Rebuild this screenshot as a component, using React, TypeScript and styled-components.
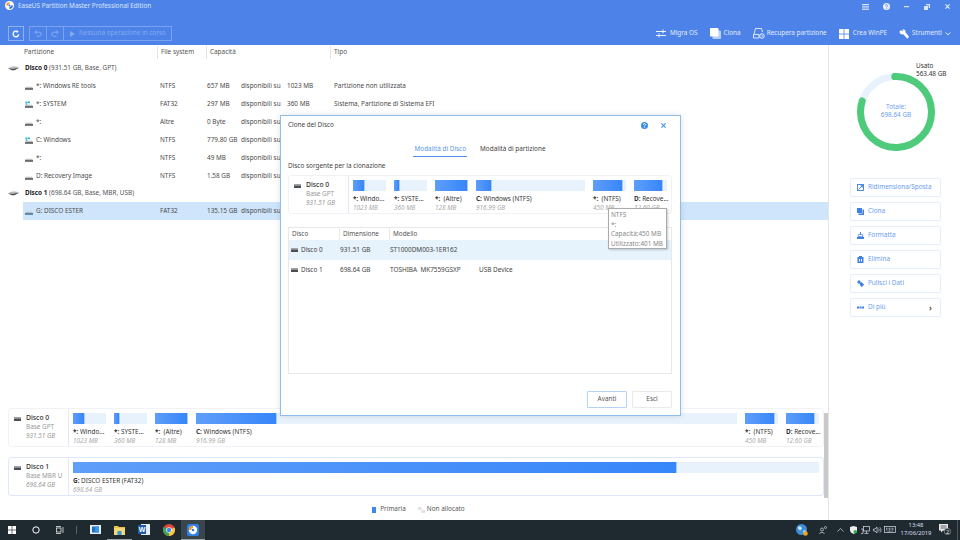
import React from "react";
import styled, { createGlobalStyle } from "styled-components";

const Global = createGlobalStyle`
  html, body { margin: 0; padding: 0; background: #fff; overflow: hidden; }
  #root { width: 960px; height: 540px; }
  * { box-sizing: border-box; }
`;

const Page = styled.div`
  position: relative;
  width: 960px;
  height: 540px;
  display: flex;
  flex-direction: column;
  font-family: "Noto Sans", "Open Sans", sans-serif;
  font-size: 6.4px;
  color: #444;
  line-height: 1;
  background: #fff;
  overflow: hidden;
`;

/* ---------- header ---------- */
const Header = styled.header`
  height: 45px;
  flex: none;
  background: #4d83e9;
  display: flex;
  flex-direction: column;
  color: #e3ecfc;
`;
const TitleBar = styled.div`
  height: 26px;
  flex: none;
  display: flex;
  align-items: flex-start;
  padding: 1px 2px 0 5px;
`;
const TitleText = styled.span`
  margin: 2px 0 0 4px;
  color: #dce7fb;
  white-space: nowrap;
`;
const WindowButtons = styled.div`
  margin-left: auto;
  display: flex;
`;
const WindowButton = styled.div`
  width: 20.5px;
  height: 11px;
  display: flex;
  align-items: center;
  justify-content: center;
`;
const Toolbar = styled.div`
  display: flex;
  align-items: center;
  padding-left: 8px;
`;
const SquareButton = styled.div`
  width: 16px;
  height: 15px;
  border: 1px solid #8cb0f0;
  display: flex;
  align-items: center;
  justify-content: center;
`;
const OpGroup = styled.div`
  margin-left: 5px;
  width: 143px;
  height: 15px;
  border: 1px solid #7aa2ee;
  display: flex;
  align-items: stretch;
`;
const OpCell = styled.div`
  width: 17px;
  display: flex;
  align-items: center;
  justify-content: center;
  border-right: 1px solid #7aa2ee;
`;
const OpLabel = styled.div`
  flex: 1;
  display: flex;
  align-items: center;
  gap: 4px;
  padding-left: 6px;
  color: #84a9ef;
  white-space: nowrap;
`;
const ToolActions = styled.div`
  margin-left: auto;
  display: flex;
  align-items: center;
  padding-right: 9px;
`;
const ToolAction = styled.div<{ $gap: number; $ml: number }>`
  display: flex;
  align-items: center;
  gap: ${(p) => p.$gap}px;
  margin-left: ${(p) => p.$ml}px;
  white-space: nowrap;
`;

/* ---------- main ---------- */
const Main = styled.main`
  flex: 1;
  display: flex;
  min-height: 0;
`;
const LeftPanel = styled.section`
  width: 829px;
  flex: none;
  display: flex;
  flex-direction: column;
  border-right: 1px solid #e6e6e6;
`;
const PartitionList = styled.div`
  flex: 1;
  min-height: 0;
`;
const ListHead = styled.div`
  height: 13px;
  margin-top: 1px;
  margin-bottom: 1px;
  display: grid;
  grid-template-columns: 157px 49px 124px 1fr;
  align-items: center;
  color: #555;
`;
const HeadCell = styled.div`
  height: 13px;
  padding-left: 3px;
  display: flex;
  align-items: center;
  border-left: 1px solid #e4e4e4;
  &:first-child {
    padding-left: 24px;
    border-left: 0;
  }
`;
const DiskRow = styled.div`
  height: 18px;
  margin-top: -1px;
  display: flex;
  align-items: center;
  padding-left: 8px;
  gap: 6px;
  color: #555;
`;
const DiskName = styled.b`
  color: #222;
  font-weight: 700;
`;
const PartRow = styled.div<{ $selected?: boolean }>`
  height: 18px;
  margin-left: 23px;
  display: grid;
  grid-template-columns: 137px 47px 34px 46px 47px 1fr;
  align-items: center;
  background: ${(p) => (p.$selected ? "#cfe5fc" : "transparent")};
  color: #4a4a4a;
  white-space: nowrap;
`;
const PartName = styled.div`
  display: flex;
  align-items: center;
  gap: 3px;
  padding-left: 2px;
`;

/* ---------- disk maps ---------- */
const MapArea = styled.div`
  height: 90px;
  flex: none;
  display: flex;
  padding-left: 8px;
`;
const MapCards = styled.div`
  width: 816px;
  flex: none;
  display: flex;
  flex-direction: column;
  gap: 10px;
`;
const Scrollbar = styled.div`
  width: 4px;
  margin-top: 5px;
  background: #c9c9c9;
`;
const Card = styled.div<{ $active?: boolean }>`
  height: 39px;
  display: flex;
  border: 1px solid ${(p) => (p.$active ? "#dde9fb" : "#f0f2f6")};
  border-radius: 3px;
  background: #fff;
  overflow: hidden;
`;
const CardInfo = styled.div`
  width: 60px;
  flex: none;
  border-right: 1px solid #dfe9f8;
  padding: 5px 0 0 5px;
  display: grid;
  grid-template-columns: 12px 1fr;
  grid-auto-rows: 9px;
  align-items: center;
  color: #999;
  white-space: nowrap;
`;
const CardTitle = styled.div`
  color: #333;
  font-weight: 500;
  font-size: 6.8px;
`;
const CardSub = styled.div`
  grid-column: 2;
`;
const CardSize = styled(CardSub)`
  font-style: italic;
`;
const Partitions = styled.div`
  flex: 1;
  min-width: 0;
  display: flex;
  gap: 8px;
  padding: 4px 4px 0;
`;
const Part = styled.div<{ $w?: number }>`
  flex: ${(p) => (p.$w ? `0 0 ${p.$w}px` : "1 1 0")};
  min-width: 0;
  white-space: nowrap;
`;
const Track = styled.div`
  height: 11px;
  background: #e7f2fd;
  margin-bottom: 4px;
`;
const Fill = styled.div`
  height: 100%;
  background: linear-gradient(90deg, #5f9ef9, #3786fa);
  border: 1px solid #a8cbfa;
  border-width: 0 1px 0 0;
`;
const PartTitle = styled.div`
  color: #333;
  height: 9px;
  display: flex;
  align-items: center;
  white-space: pre;
`;
const PartSize = styled.div`
  color: #aaa;
  height: 9px;
  display: flex;
  align-items: center;
  font-style: italic;
`;
const Legend = styled.div`
  height: 22px;
  flex: none;
  display: flex;
  align-items: center;
  justify-content: center;
  gap: 12px;
  padding: 1px 0 0 9px;
  color: #555;
`;
const LegendItem = styled.div<{ $gap: number }>`
  display: flex;
  align-items: center;
  gap: ${(p) => p.$gap}px;
`;
const Swatch = styled.span`
  width: 4px;
  height: 6px;
  background: #3f86f5;
`;

/* ---------- sidebar ---------- */
const Sidebar = styled.aside`
  flex: 1;
`;
const DonutWrap = styled.div`
  position: relative;
  height: 133px;
  padding: 28px 0 0 28px;
`;
const UsedLabel = styled.div`
  position: absolute;
  left: 87px;
  top: 17px;
  color: #333;
  line-height: 8px;
`;
const TotalLabel = styled.div`
  position: absolute;
  left: 28px;
  top: 58px;
  width: 78px;
  text-align: center;
  color: #6c9ff0;
  line-height: 8px;
`;
const Actions = styled.div`
  margin-left: 21px;
  width: 91px;
  display: flex;
  flex-direction: column;
  gap: 5px;
`;
const ActionButton = styled.div`
  height: 19px;
  border: 1px solid #e6eefa;
  border-radius: 2px;
  display: flex;
  align-items: center;
  gap: 4px;
  padding-left: 6px;
  padding-right: 8px;
  color: #6a9df0;
  white-space: nowrap;
`;
const More = styled.span`
  margin-left: auto;
  color: #555;
  font-size: 8px;
  font-weight: 700;
`;

/* ---------- dialog ---------- */
const Dialog = styled.div`
  position: absolute;
  left: 280px;
  top: 115px;
  width: 401px;
  height: 301px;
  background: #fff;
  border: 1px solid #8dbfea;
  padding: 0 8px 0 7px;
  box-shadow: 0 0 6px rgba(0, 0, 0, 0.12);
`;
const DialogHead = styled.div`
  height: 17px;
  display: flex;
  align-items: center;
  color: #444;
  padding-top: 1px;
`;
const DialogIcons = styled.div`
  margin-left: auto;
  display: flex;
  align-items: center;
  gap: 13px;
  padding-right: 6px;
`;
const Tabs = styled.div`
  margin-top: 9px;
  height: 15px;
  display: flex;
  justify-content: center;
  gap: 12px;
`;
const Tab = styled.div<{ $active?: boolean }>`
  padding: 0 1px;
  display: flex;
  align-items: center;
  border-bottom: 1px solid ${(p) => (p.$active ? "#4d8fe8" : "transparent")};
  color: ${(p) => (p.$active ? "#5a98e8" : "#444")};
  white-space: nowrap;
`;
const SourceLabel = styled.div`
  height: 12px;
  margin: 3px 0;
  display: flex;
  align-items: center;
  color: #444;
`;
const DiskTable = styled.div`
  margin-top: 13px;
  height: 147px;
  border: 1px solid #e8e8e8;
`;
const TableHead = styled.div`
  height: 12px;
  display: grid;
  grid-template-columns: 50px 50px 1fr;
  color: #555;
`;
const TableHeadCell = styled.div`
  display: flex;
  align-items: center;
  padding-left: 3px;
  border-left: 1px solid #e8e8e8;
  &:first-child { border-left: 0; }
`;
const TableRow = styled.div<{ $selected?: boolean }>`
  height: 20px;
  display: grid;
  grid-template-columns: 50px 50px 90px 1fr;
  align-items: center;
  background: ${(p) => (p.$selected ? "#e6f2fc" : "transparent")};
  color: #444;
  white-space: nowrap;
`;
const TableDisk = styled.div`
  display: flex;
  align-items: center;
  gap: 3px;
  padding-left: 2px;
`;
const TableText = styled.div`
  padding-left: 1px;
`;
const DialogFooter = styled.div`
  margin-top: 17px;
  display: flex;
  justify-content: flex-end;
  gap: 5px;
`;
const DialogButton = styled.div<{ $primary?: boolean }>`
  width: 40px;
  height: 17px;
  display: flex;
  align-items: center;
  justify-content: center;
  border: 1px solid ${(p) => (p.$primary ? "#b4d3f5" : "#eaeaea")};
  border-radius: 1px;
  color: #555;
`;
const Tooltip = styled.div`
  position: absolute;
  left: 608px;
  top: 208px;
  width: 59px;
  height: 41px;
  background: #fff;
  border: 1px solid #aaa;
  box-shadow: 1px 1px 2px rgba(0, 0, 0, 0.2);
  padding: 1px 2px;
  color: #888;
  line-height: 9.5px;
  white-space: nowrap;
`;

/* ---------- taskbar ---------- */
const Taskbar = styled.footer`
  height: 20px;
  flex: none;
  background: #1e2a30;
  display: flex;
  align-items: stretch;
  color: #e8e8e8;
`;
const TaskSlot = styled.div<{ $w: number; $active?: boolean; $open?: boolean }>`
  width: ${(p) => p.$w}px;
  flex: none;
  display: flex;
  align-items: center;
  justify-content: center;
  background: ${(p) => (p.$active ? "#3a464c" : "transparent")};
  border-bottom: 1px solid ${(p) => (p.$open ? "#9aa3a8" : "transparent")};
`;
const TaskDivider = styled.div`
  width: 1px;
  height: 8px;
  align-self: center;
  background: #55606a;
  margin: 0 6px 0 4px;
`;
const Tray = styled.div`
  margin-left: auto;
  display: flex;
  align-items: stretch;
`;
const Clock = styled.div`
  width: 40px;
  display: flex;
  flex-direction: column;
  align-items: center;
  justify-content: center;
  gap: 2px;
  font-size: 5.8px;
  color: #dde;
`;
const ShowDesktop = styled.div`
  width: 1px;
  margin: 0 2px 0 3px;
  background: #4a555b;
`;

/* ---------- icons ---------- */
const Drive = ({ kind = "plain" }: { kind?: "plain" | "system" | "blue" }) => (
  <svg width="8" height="7" viewBox="0 0 8 7">
    {kind === "system" && (
      <>
        <rect x="0.5" y="0.5" width="2" height="1.6" fill="#28b5d8" />
        <rect x="3" y="0.5" width="2" height="1.6" fill="#28b5d8" />
        <rect x="0.5" y="2.4" width="2" height="1.3" fill="#28b5d8" />
      </>
    )}
    <path d="M1 3.8h6l1 1.3H0z" fill="#bcc1c4" />
    <rect x="0" y="5.1" width="8" height="1.7" fill={kind === "blue" ? "#4a7aa8" : "#5a5f62"} />
  </svg>
);
const BigDisk = () => (
  <svg width="11" height="6" viewBox="0 0 11 6">
    <path d="M0 3.2 4 1.4h4l3 1.4-4.500 2.200H4z" fill="#b5b9bd" />
    <path d="M0 3.2 4.200 4 11 2.800 6.500 5.200H3.800z" fill="#4a4f52" />
  </svg>
);
const SmallDisk = () => (
  <svg width="7" height="4" viewBox="0 0 7 4">
    <rect y="0" width="7" height="1.5" fill="#a0a4a8" />
    <rect y="1.5" width="7" height="2.5" fill="#4a4e51" />
  </svg>
);
const Logo = () => (
  <svg width="9" height="9" viewBox="0 0 12 12">
    <circle cx="6" cy="6" r="6" fill="#fff" />
    <path d="M6 1.5A4.500 4.500 0 0 0 1.500 6H4a2 2 0 0 1 2-2z" fill="#f29a1f" />
    <path d="M6 10.500A4.500 4.500 0 0 0 10.500 6H8a2 2 0 0 1-2 2z" fill="#2d6fd8" />
    <circle cx="6" cy="6" r="1.300" fill="#2d6fd8" />
  </svg>
);
const MenuIcon = () => (
  <svg width="7" height="6" viewBox="0 0 7 6" fill="#dbe6fa">
    <rect width="7" height="1.2" />
    <rect y="2.3" width="7" height="1.2" />
    <rect y="4.6" width="7" height="1.2" />
  </svg>
);
const HelpIcon = ({ bg = "#e6eefb", fg = "#4d83e9" }: { bg?: string; fg?: string }) => (
  <svg width="7" height="7" viewBox="0 0 8 8">
    <circle cx="4" cy="4" r="4" fill={bg} />
    <path d="M2.800 3.100A1.200 1.200 0 1 1 4.600 4.200c-.4.3-.6.5-.6.9" stroke={fg} strokeWidth="0.9" fill="none" />
    <circle cx="4" cy="6.200" r="0.550" fill={fg} />
  </svg>
);
const MinIcon = () => (
  <svg width="5" height="2" viewBox="0 0 5 2"><rect width="5" height="1.2" fill="#dbe6fa" /></svg>
);
const RestoreIcon = () => (
  <svg width="6" height="6" viewBox="0 0 6 6" fill="#dbe6fa">
    <rect x="0" y="2" width="4" height="4" />
    <path d="M2 0h4v4H4.700V1.200H2z" />
  </svg>
);
const CloseIcon = ({ color = "#e6eefb" }: { color?: string }) => (
  <svg width="5" height="5" viewBox="0 0 6 6" stroke={color} strokeWidth="1.3">
    <path d="M.5.5l5 5M5.500.5l-5 5" />
  </svg>
);
const RefreshIcon = () => (
  <svg width="8" height="8" viewBox="0 0 8 8" fill="none" stroke="#fff" strokeWidth="1.3">
    <path d="M6.700 4.400A2.800 2.800 0 1 1 5.600 1.700" />
    <path d="M4.800 0.200 6.400 1.800 4.600 3" fill="#fff" strokeWidth="0.3" />
  </svg>
);
const UndoIcon = () => (
  <svg width="8" height="7" viewBox="0 0 8 7" fill="none" stroke="#8eb0f0" strokeWidth="0.9">
    <path d="M2.600.6.800 2.200l1.800 1.600M.8 2.200h4.400a2 2 0 0 1 0 4H2.500" />
  </svg>
);
const RedoIcon = () => (
  <svg width="8" height="7" viewBox="0 0 8 7" fill="none" stroke="#8eb0f0" strokeWidth="0.9">
    <path d="M5.400.6 7.200 2.200 5.400 3.800M7.200 2.200H2.800a2 2 0 0 0 0 4h2.700" />
  </svg>
);
const PlayIcon = () => (
  <svg width="5" height="6" viewBox="0 0 5 6"><path d="M0 0l5 3-5 3z" fill="#84a9ef" /></svg>
);
const MigrateIcon = () => (
  <svg width="10" height="9" viewBox="0 0 10 9" stroke="#fff" strokeWidth="0.9" fill="none">
    <path d="M0 2.500h10M7 .5v4M0 6.500h10M3 4.500v4" />
  </svg>
);
const CloneIcon = () => (
  <svg width="11" height="11" viewBox="0 0 11 11">
    <rect x="2.500" y="2.500" width="8.500" height="8.500" rx="1" fill="#b6cdf6" />
    <rect x="0" y="0" width="8.500" height="8.500" rx="1" fill="#fff" />
  </svg>
);
const RecoverIcon = () => (
  <svg width="12" height="11" viewBox="0 0 12 11" fill="none" stroke="#fff" strokeWidth="0.8">
    <path d="M1 6 2.500.5h6L9.500 4" />
    <path d="M.5 6.500h5.500v3.500H.5z" />
    <circle cx="9" cy="8" r="2.300" />
    <path d="M9 6.800V8l.8.6" />
  </svg>
);
const WinIcon = ({ size }: { size: number }) => (
  <svg width={size} height={size} viewBox="0 0 10 10" fill="#fff">
    <rect width="4.600" height="4.600" />
    <rect x="5.400" width="4.600" height="4.600" />
    <rect y="5.400" width="4.600" height="4.600" />
    <rect x="5.400" y="5.400" width="4.600" height="4.600" />
  </svg>
);
const WrenchIcon = () => (
  <svg width="10" height="10" viewBox="0 0 10 10"><path d="M.5 2.500 2 1l1.300 1.300L4.300 1.300 3.300.3C5 -.3 7 1 6.500 3.200L10 7.800 8.300 9.800 4.300 5.300C2.500 5.800.3 4.500.5 2.500z" fill="#fff" /></svg>
);
const Chevron = () => (
  <svg width="6" height="4" viewBox="0 0 5 4" fill="none" stroke="#fff" strokeWidth="0.9"><path d="M.3.6 2.500 2.900 4.700.6" /></svg>
);
const ResizeIcon = () => (
  <svg width="7" height="7" viewBox="0 0 7 7" fill="none" stroke="#3f80e8" strokeWidth="0.9">
    <rect x="0.500" y="0.500" width="6" height="6" />
    <path d="M1.500 5.500l4-4M3.500 1.500h2v2" />
  </svg>
);
const SideCloneIcon = () => (
  <svg width="7" height="7" viewBox="0 0 7 7">
    <rect x="0" y="0" width="5" height="5" fill="#3f80e8" />
    <path d="M5.500 1.500H7V7H1.500V5.500h4z" fill="#3f80e8" />
  </svg>
);
const FormatIcon = () => (
  <svg width="7" height="7" viewBox="0 0 7 7" fill="#3f80e8">
    <rect x="3" y="0" width="1" height="2.500" />
    <path d="M1.500 2.500h4L6 4.500H1z" fill="none" stroke="#3f80e8" strokeWidth="0.7" />
    <rect x="0" y="5" width="7" height="2" />
  </svg>
);
const TrashIcon = () => (
  <svg width="7" height="7" viewBox="0 0 7 7" fill="#3f80e8">
    <rect x="2" y="0" width="3" height="1" />
    <rect x="0.500" y="1" width="6" height="6" />
    <rect x="2" y="3" width="1" height="2.500" fill="#fff" />
    <rect x="4" y="3" width="1" height="2.500" fill="#fff" />
  </svg>
);
const WipeIcon = () => (
  <svg width="7" height="7" viewBox="0 0 7 7" fill="#3f80e8">
    <path d="M0 2 2 0l2 2L2 4z" />
    <path d="M2.500 3.500 4.500 2 7 4.500 5 7 3.500 6z" />
  </svg>
);
const DotsIcon = () => (
  <svg width="7" height="3" viewBox="0 0 7 3" fill="#3f80e8">
    <rect y="0.500" width="2" height="2" />
    <rect x="2.500" y="0.500" width="2" height="2" />
    <rect x="5" y="0.500" width="2" height="2" />
  </svg>
);
const UnallocatedSwatch = () => (
  <svg width="7" height="6" viewBox="0 0 7 6" fill="#e2e2e2">
    <rect width="3.500" height="3" />
    <rect x="3.500" y="3" width="3.500" height="3" />
  </svg>
);
const SearchRing = () => (
  <svg width="8" height="8" viewBox="0 0 8 8"><circle cx="4" cy="4" r="3.200" fill="none" stroke="#fff" strokeWidth="1" /></svg>
);
const TaskViewIcon = () => (
  <svg width="8" height="8" viewBox="0 0 8 8" fill="none" stroke="#fff" strokeWidth="0.7">
    <rect x="0.500" y="2" width="4.500" height="4" />
    <path d="M0 .5h5M0 7.500h5M7 1v6" />
  </svg>
);
const StoreIcon = () => (
  <svg width="11" height="9" viewBox="0 0 11 9">
    <rect width="11" height="9" fill="#e8eef3" />
    <rect x="2" y="1.500" width="7" height="6" fill="#1e6fc0" />
    <rect x="5" y="1.500" width="4" height="6" fill="#3a96e8" />
  </svg>
);
const FolderIcon = () => (
  <svg width="11" height="10" viewBox="0 0 11 10">
    <path d="M0 1h4l1 1h6v8H0z" fill="#e8c04a" />
    <rect x="0" y="3" width="11" height="7" fill="#f5d873" />
    <rect x="3.500" y="6" width="4" height="4" fill="#3a96d8" />
  </svg>
);
const WordIcon = () => (
  <svg width="12" height="11" viewBox="0 0 12 11">
    <rect x="3" y="0" width="9" height="11" fill="#e6eef8" />
    <rect x="0" y="1" width="8" height="9" fill="#1f5cab" />
    <text x="4" y="8" fontSize="7" fontWeight="700" fill="#fff" textAnchor="middle" fontFamily="Liberation Sans">W</text>
  </svg>
);
const ChromeIcon = () => (
  <svg width="12" height="12" viewBox="0 0 12 12">
    <circle cx="6" cy="6" r="6" fill="#e2483a" />
    <path d="M6 6 .8 3A6 6 0 0 0 6 12l2.600-5z" fill="#3aa757" />
    <path d="M6 6l5.500-2.400A6 6 0 0 1 6 12z" fill="#f7c53a" />
    <circle cx="6" cy="6" r="2.800" fill="#fff" />
    <circle cx="6" cy="6" r="2.200" fill="#4285f4" />
  </svg>
);
const EaseIcon = () => (
  <svg width="12" height="12" viewBox="0 0 12 12">
    <rect width="12" height="12" rx="2" fill="#2f7fe8" />
    <circle cx="6" cy="6" r="4.200" fill="#fff" />
    <path d="M6 1.800A4.200 4.200 0 0 0 1.800 6h2.200A2 2 0 0 1 6 4z" fill="#f29a1f" />
    <circle cx="6" cy="6" r="1.300" fill="#2f7fe8" />
  </svg>
);
const GlobeIcon = () => (
  <svg width="12" height="12" viewBox="0 0 12 12">
    <circle cx="5.500" cy="5.500" r="5.500" fill="#3a8fd8" />
    <path d="M2 2.500h3l1 2-2 2-2-2zM7 6.500h3L8 10z" fill="#cfe6f8" />
    <circle cx="9.500" cy="9.500" r="2.300" fill="#f2a51f" />
  </svg>
);
const PersonIcon = () => (
  <svg width="8" height="8" viewBox="0 0 8 8" fill="none" stroke="#dde" strokeWidth="0.7">
    <circle cx="3" cy="3.500" r="1.500" />
    <path d="M.4 8a2.700 2.700 0 0 1 5 0" />
    <circle cx="6.500" cy="1.500" r="1" />
  </svg>
);
const Caret = () => (
  <svg width="7" height="4" viewBox="0 0 7 4" fill="none" stroke="#dde" strokeWidth="0.7"><path d="M.5 3.500 3.500.5l3 3" /></svg>
);
const ShieldIcon = () => (
  <svg width="7" height="8" viewBox="0 0 7 8">
    <path d="M3.500 0 7 1v3c0 2-1.500 3.200-3.500 4C1.500 7.200 0 6 0 4V1z" fill="#eee" />
    <circle cx="5.200" cy="5.700" r="1.800" fill="#2fae4e" />
  </svg>
);
const NetworkIcon = () => (
  <svg width="9" height="8" viewBox="0 0 9 8" fill="none" stroke="#dde" strokeWidth="0.7">
    <rect x="2.500" y="0.500" width="6" height="4.500" />
    <path d="M5.500 5v2M3.500 7.500h4M0 3h2v4.500H0" />
  </svg>
);
const SpeakerIcon = () => (
  <svg width="9" height="8" viewBox="0 0 9 8" fill="none" stroke="#dde" strokeWidth="0.7">
    <path d="M.5 3v2h1.500L4 7V1L2 3z" />
    <path d="M5.500 2.500a2 2 0 0 1 0 3M6.800 1.300a3.600 3.600 0 0 1 0 5.400" />
  </svg>
);
const KeyboardIcon = () => (
  <svg width="12" height="7" viewBox="0 0 12 7" fill="none" stroke="#dde" strokeWidth="0.7">
    <rect x="0.400" y="0.400" width="11.200" height="6.200" />
    <path d="M2 2.300h8M2 3.800h8M3.500 5.300h5" strokeDasharray="1 0.500" />
  </svg>
);
const NotifyIcon = () => (
  <svg width="12" height="11" viewBox="0 0 12 11">
    <path d="M0 0h9v6.500H4L2 8.500v-2H0z" fill="#e8e8e8" />
    <path d="M1.500 2h6M1.500 4h6" stroke="#1e2a30" strokeWidth="0.7" />
    <circle cx="8.500" cy="7.500" r="3.200" fill="#1e2a30" stroke="#ccc" strokeWidth="0.5" />
    <text x="8.500" y="9.500" fontSize="5.500" fill="#eee" textAnchor="middle" fontFamily="Noto Sans">2</text>
  </svg>
);

/* ---------- data ---------- */
type Segment = { lead: string; name: string; size: string; w?: number; fill: number };
const disk0: Segment[] = [
  { lead: "*:", name: " Windo...", size: "1023 MB", w: 33, fill: 36 },
  { lead: "*:", name: " SYSTE...", size: "360 MB", w: 33, fill: 18 },
  { lead: "*:", name: "  (Altre)", size: "128 MB", w: 33, fill: 100 },
  { lead: "C:", name: " Windows (NTFS)", size: "916.99 GB", fill: 15 },
  { lead: "*:", name: "  (NTFS)", size: "450 MB", w: 33, fill: 90 },
  { lead: "D:", name: " Recove...", size: "12.60 GB", w: 33, fill: 88 },
];
const disk1: Segment[] = [{ lead: "G:", name: " DISCO ESTER (FAT32)", size: "698.64 GB", fill: 81 }];

type PartitionRow = { name: string; icon?: "plain" | "system" | "blue"; fs: string; free: string; total?: string; type?: string; selected?: boolean };
const disk0Rows: PartitionRow[] = [
  { name: "*: Windows RE tools", fs: "NTFS", free: "657 MB", total: "1023 MB", type: "Partizione non utilizzata" },
  { name: "*: SYSTEM", icon: "system", fs: "FAT32", free: "297 MB", total: "360 MB", type: "Sistema, Partizione di Sistema EFI" },
  { name: "*:", fs: "Altre", free: "0 Byte" },
  { name: "C: Windows", icon: "system", fs: "NTFS", free: "779.80 GB" },
  { name: "*:", fs: "NTFS", free: "49 MB" },
  { name: "D: Recovery Image", fs: "NTFS", free: "1.58 GB" },
];

const DiskCard = ({ title, sub, size, segments, active }: { title: string; sub: string; size: string; segments: Segment[]; active?: boolean }) => (
  <Card $active={active}>
    <CardInfo>
      <SmallDisk />
      <CardTitle>{title}</CardTitle>
      <CardSub>{sub}</CardSub>
      <CardSize>{size}</CardSize>
    </CardInfo>
    <Partitions>
      {segments.map((s, i) => (
        <Part key={i} $w={s.w}>
          <Track>
            <Fill style={{ width: `${s.fill}%` }} />
          </Track>
          <PartTitle>
            <b>{s.lead}</b>
            <span>{s.name}</span>
          </PartTitle>
          <PartSize>{s.size}</PartSize>
        </Part>
      ))}
    </Partitions>
  </Card>
);

const Row = ({ r }: { r: PartitionRow }) => (
  <PartRow $selected={r.selected}>
    <PartName>
      <Drive kind={r.icon} />
      {r.name}
    </PartName>
    <span>{r.fs}</span>
    <span>{r.free}</span>
    <span>disponibili su</span>
    <span>{r.total}</span>
    <span>{r.type}</span>
  </PartRow>
);

export default function App() {
  return (
    <Page>
      <Global />
      <Header>
        <TitleBar>
          <Logo />
          <TitleText>EaseUS Partition Master Professional Edition</TitleText>
          <WindowButtons>
            <WindowButton><MenuIcon /></WindowButton>
            <WindowButton><HelpIcon /></WindowButton>
            <WindowButton><MinIcon /></WindowButton>
            <WindowButton><RestoreIcon /></WindowButton>
            <WindowButton><CloseIcon /></WindowButton>
          </WindowButtons>
        </TitleBar>
        <Toolbar>
          <SquareButton><RefreshIcon /></SquareButton>
          <OpGroup>
            <OpCell><UndoIcon /></OpCell>
            <OpCell><RedoIcon /></OpCell>
            <OpLabel><PlayIcon />Nessuna operazione in corso</OpLabel>
          </OpGroup>
          <ToolActions>
            <ToolAction $gap={4} $ml={0}><MigrateIcon />Migra OS</ToolAction>
            <ToolAction $gap={3} $ml={12}><CloneIcon />Clona</ToolAction>
            <ToolAction $gap={2} $ml={12}><RecoverIcon />Recupera partizione</ToolAction>
            <ToolAction $gap={4} $ml={12}><WinIcon size={10} />Crea WinPE</ToolAction>
            <ToolAction $gap={3} $ml={12}><WrenchIcon />Strumenti<Chevron /></ToolAction>
          </ToolActions>
        </Toolbar>
      </Header>

      <Main>
        <LeftPanel>
          <PartitionList>
            <ListHead>
              <HeadCell>Partizione</HeadCell>
              <HeadCell>File system</HeadCell>
              <HeadCell>Capacità</HeadCell>
              <HeadCell>Tipo</HeadCell>
            </ListHead>
            <DiskRow>
              <BigDisk />
              <span><DiskName>Disco 0</DiskName> (931.51 GB, Base, GPT)</span>
            </DiskRow>
            {disk0Rows.map((r, i) => <Row key={i} r={r} />)}
            <DiskRow>
              <BigDisk />
              <span><DiskName>Disco 1</DiskName> (698.64 GB, Base, MBR, USB)</span>
            </DiskRow>
            <Row r={{ name: "G: DISCO ESTER", icon: "blue", fs: "FAT32", free: "135.15 GB", selected: true }} />
          </PartitionList>
          <MapArea>
            <MapCards>
              <DiskCard title="Disco 0" sub="Base GPT" size="931.51 GB" segments={disk0} />
              <DiskCard title="Disco 1" sub="Base MBR U" size="698.64 GB" segments={disk1} active />
            </MapCards>
            <Scrollbar />
          </MapArea>
          <Legend>
            <LegendItem $gap={4}><Swatch />Primaria</LegendItem>
            <LegendItem $gap={2}><UnallocatedSwatch />Non allocato</LegendItem>
          </Legend>
        </LeftPanel>

        <Sidebar>
          <DonutWrap>
            <svg width="78" height="78" viewBox="0 0 78 78">
              <circle cx="39" cy="39" r="35.500" fill="none" stroke="#e8f2fc" strokeWidth="7" />
              <circle
                cx="39"
                cy="39"
                r="35.500"
                fill="none"
                stroke="#4ecb7a"
                strokeWidth="7"
                strokeLinecap="round"
                pathLength={100}
                strokeDasharray="80.600 100"
                transform="rotate(-92 39 39)"
              />
            </svg>
            <UsedLabel>Usato<br />563.48 GB</UsedLabel>
            <TotalLabel>Totale:<br />698.64 GB</TotalLabel>
          </DonutWrap>
          <Actions>
            <ActionButton><ResizeIcon />Ridimensiona/Sposta</ActionButton>
            <ActionButton><SideCloneIcon />Clona</ActionButton>
            <ActionButton><FormatIcon />Formatta</ActionButton>
            <ActionButton><TrashIcon />Elimina</ActionButton>
            <ActionButton><WipeIcon />Pulisci i Dati</ActionButton>
            <ActionButton><DotsIcon />Di più<More>›</More></ActionButton>
          </Actions>
        </Sidebar>
      </Main>

      <Taskbar>
        <TaskSlot $w={24}><WinIcon size={8} /></TaskSlot>
        <TaskSlot $w={24}><SearchRing /></TaskSlot>
        <TaskSlot $w={24}><TaskViewIcon /></TaskSlot>
        <TaskDivider />
        <TaskSlot $w={24}><StoreIcon /></TaskSlot>
        <TaskSlot $w={25} $open><FolderIcon /></TaskSlot>
        <TaskSlot $w={24}><WordIcon /></TaskSlot>
        <TaskSlot $w={25}><ChromeIcon /></TaskSlot>
        <TaskSlot $w={24} $active $open><EaseIcon /></TaskSlot>
        <Tray>
          <TaskSlot $w={20}><GlobeIcon /></TaskSlot>
          <TaskSlot $w={22}><PersonIcon /></TaskSlot>
          <TaskSlot $w={12}><Caret /></TaskSlot>
          <TaskSlot $w={14}><ShieldIcon /></TaskSlot>
          <TaskSlot $w={10}><NetworkIcon /></TaskSlot>
          <TaskSlot $w={14}><SpeakerIcon /></TaskSlot>
          <TaskSlot $w={12}><KeyboardIcon /></TaskSlot>
          <Clock><span>13:48</span><span>17/06/2019</span></Clock>
          <TaskSlot $w={18}><NotifyIcon /></TaskSlot>
          <ShowDesktop />
        </Tray>
      </Taskbar>

      <Dialog>
        <DialogHead>
          Clone del Disco
          <DialogIcons>
            <HelpIcon bg="#3f8fe0" fg="#fff" />
            <CloseIcon color="#3f8fe0" />
          </DialogIcons>
        </DialogHead>
        <Tabs>
          <Tab $active>Modalità di Disco</Tab>
          <Tab>Modalità di partizione</Tab>
        </Tabs>
        <SourceLabel>Disco sorgente per la clonazione</SourceLabel>
        <DiskCard title="Disco 0" sub="Base GPT" size="931.51 GB" segments={disk0} />
        <DiskTable>
          <TableHead>
            <TableHeadCell>Disco</TableHeadCell>
            <TableHeadCell>Dimensione</TableHeadCell>
            <TableHeadCell>Modello</TableHeadCell>
          </TableHead>
          <TableRow $selected>
            <TableDisk><SmallDisk />Disco 0</TableDisk>
            <TableText>931.51 GB</TableText>
            <TableText>ST1000DM003-1ER162</TableText>
            <span />
          </TableRow>
          <TableRow>
            <TableDisk><SmallDisk />Disco 1</TableDisk>
            <TableText>698.64 GB</TableText>
            <TableText>TOSHIBA&nbsp; MK7559GSXP</TableText>
            <span>USB Device</span>
          </TableRow>
        </DiskTable>
        <DialogFooter>
          <DialogButton $primary>Avanti</DialogButton>
          <DialogButton>Esci</DialogButton>
        </DialogFooter>
      </Dialog>

      <Tooltip>
        NTFS<br />*:<br />Capacità:450 MB<br />Utilizzato:401 MB
      </Tooltip>
    </Page>
  );
}
